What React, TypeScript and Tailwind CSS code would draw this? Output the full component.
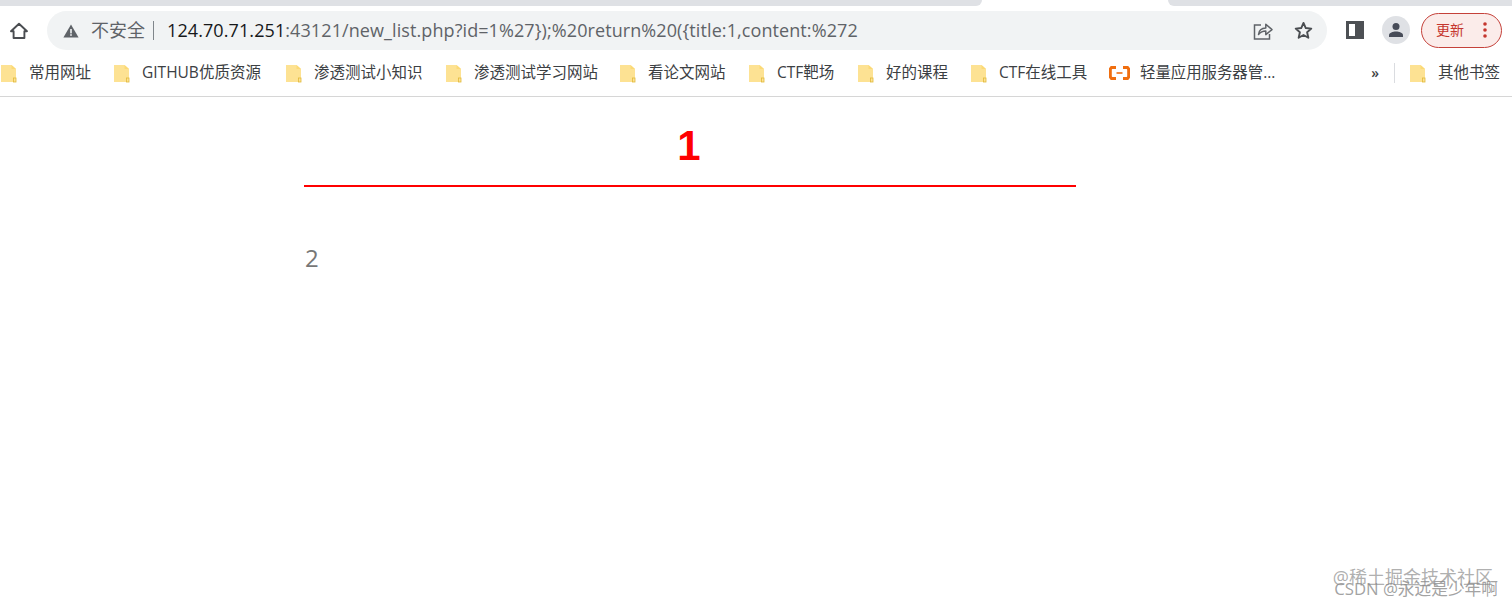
const CJK = "font-['Open_Sans','Noto_Sans_CJK_SC',sans-serif]";
const URL_REST = ":43121/new_list.php?id=1%27});%20return%20({title:1,content:%272";

const BOOKMARKS = [
  { label: "常用网址", width: "w-[113px]" },
  { label: "GITHUB优质资源", width: "w-[172px]" },
  { label: "渗透测试小知识", width: "w-[160px]" },
  { label: "渗透测试学习网站", width: "w-[174px]" },
  { label: "看论文网站", width: "w-[129px]" },
  { label: "CTF靶场", width: "w-[109px]" },
  { label: "好的课程", width: "w-[113px]" },
  { label: "CTF在线工具", width: "w-[138px]" },
];

function Folder() {
  return (
    <svg width="16" height="19" viewBox="0 0 16 19" className="shrink-0">
      <path d="M0 1h10.5L15 5v13H0z" fill="#fde293" />
      <path d="M10.5 1L15 5h-4.5z" fill="#fbd976" />
      <rect x="12.5" y="14" width="2.5" height="4" fill="none" stroke="#e2b93b" strokeWidth="0.8" />
    </svg>
  );
}

function Bookmark({ label, width }: { label: string; width: string }) {
  return (
    <div className={`flex items-center gap-[12px] shrink-0 ${width}`}>
      <Folder />
      <span className="text-[15.5px] text-[#3c4043] whitespace-nowrap">{label}</span>
    </div>
  );
}

function Toolbar() {
  return (
    <div className="flex items-center h-[44px] bg-white">
      <div className="w-[47px] flex justify-center shrink-0">
        <svg width="20" height="20" viewBox="0 0 20 20" className="mt-[5px] mr-[10px]" fill="none" stroke="#4a4d51" strokeWidth="1.9">
          <path d="M2 10.2L10 2.8l8 7.4h-2.6V17H4.6v-6.8z" strokeLinejoin="round" />
        </svg>
      </div>
      <div className="flex items-center w-[1280px] h-[39px] mt-[5px] rounded-full bg-[#f1f3f4] pl-[16px] shrink-0">
        <svg width="16" height="14" viewBox="0 0 16 14" className="shrink-0">
          <path d="M8 0.5L15.6 13.5H0.4z" fill="#5f6368" />
          <rect x="7.2" y="5" width="1.6" height="4.4" fill="#f1f3f4" />
          <rect x="7.2" y="10.2" width="1.6" height="1.6" fill="#f1f3f4" />
        </svg>
        <span className="ml-[12px] text-[18px] text-[#5f6368] whitespace-nowrap">不安全</span>
        <span className="ml-[8px] w-px h-[19px] bg-[#80868b]" />
        <span className="ml-[13px] text-[18px] whitespace-nowrap text-[#5f6368] tracking-[0.09px]">
          <span className="text-[#16181a]">124.70.71.251</span>
          {URL_REST}
        </span>
        <div className="ml-auto flex items-center gap-[21px] pr-[14px]">
          <svg width="20" height="20" viewBox="0 0 20 20" fill="none" stroke="#5f6368" strokeWidth="1.5">
            <path d="M8 4H1.5v14h15v-5" />
            <path d="M5.5 13.5c.4-4 3.2-6.4 7.3-6.5V3.2L19 8.6l-6.2 5V10c-3 0-5.3 1-7.3 3.5z" strokeLinejoin="round" />
          </svg>
          <svg width="19" height="19" viewBox="0 0 20 20" fill="none" stroke="#4a4d51" strokeWidth="2">
            <path d="M10 2l2.4 5.4 5.8.6-4.4 3.9 1.3 5.7L10 14.7l-5.1 2.9 1.3-5.7L1.8 8l5.8-.6z" strokeLinejoin="round" />
          </svg>
        </div>
      </div>
      <div className="flex items-center ml-[19px] mt-[4px]">
        <div className="w-[18px] h-[18px] border-[3px] border-[#4d5054] border-r-[9px] bg-white" />
        <div className="ml-[18px] w-[28px] h-[28px] rounded-full bg-[#dfe1e5] flex items-center justify-center">
          <svg width="16" height="16" viewBox="0 0 16 16" fill="#474c58">
            <circle cx="8" cy="4.5" r="3.5" />
            <path d="M1 15v-1.8C1 10.8 5 9.6 8 9.6s7 1.2 7 3.6V15z" />
          </svg>
        </div>
        <div className="ml-[11px] w-[81px] h-[35px] rounded-full border-[1.5px] border-[#c5413a] bg-[#fbecea] flex items-center pl-[14px]">
          <span className="text-[14px] text-[#c5362e] leading-none">更新</span>
          <svg width="4" height="16" viewBox="0 0 4 16" fill="#c5362e" className="ml-[19px]">
            <circle cx="2" cy="2" r="1.8" />
            <circle cx="2" cy="8" r="1.8" />
            <circle cx="2" cy="14" r="1.8" />
          </svg>
        </div>
      </div>
    </div>
  );
}

function BookmarkBar() {
  return (
    <div className="flex items-center h-[47px] pl-px border-b border-b-[#d6d6d6] bg-white">
      {BOOKMARKS.map((b) => (
        <Bookmark key={b.label} label={b.label} width={b.width} />
      ))}
      <div className="flex items-center gap-[10px] shrink-0">
        <svg width="21" height="14" viewBox="0 0 21 14" fill="none" stroke="#f06e0f" strokeWidth="3">
          <path d="M7 1.5H2.5L1.3 3v8l1.2 1.5H7" />
          <path d="M14 1.5h4.500L19.700 3v8l-1.200 1.500H14" />
          <path d="M7.5 7h6" strokeWidth="1.6" />
        </svg>
        <span className="text-[15.4px] text-[#3c4043] whitespace-nowrap">轻量应用服务器管...</span>
      </div>
      <div className="ml-auto flex items-center shrink-0">
        <span className="text-[14px] text-[#3c4043] font-semibold leading-none">»</span>
        <span className="ml-[15px] w-px h-[20px] bg-[#dadce0]" />
        <div className="ml-[15px]">
          <Bookmark label="其他书签" width="w-[102px]" />
        </div>
      </div>
    </div>
  );
}

export default function App() {
  return (
    <div className={`relative h-[606px] w-[1512px] overflow-hidden bg-white ${CJK}`}>
      <div className="flex h-[6px] bg-white">
        <div className="w-[982px] rounded-br-[7px] bg-[#dfe1e5]" />
        <div className="ml-[186px] flex-1 rounded-bl-[7px] bg-[#dfe1e5]" />
      </div>
      <Toolbar />
      <BookmarkBar />
      <div className="ml-[304px] w-[772px]">
        <h1 className="h-[90px] pt-[21px] pr-[2px] border-b-2 border-b-[#f00] text-center text-[42px] leading-[56px] font-bold text-[#f00] font-['Liberation_Sans',sans-serif]">
          1
        </h1>
        <p className="mt-[55px] text-[24px] leading-[32px] text-[#777] pl-px">2</p>
      </div>
      <div className="absolute right-[19px] top-[566px] text-[18px] leading-[22px] text-[#9a9a9a]/80 whitespace-nowrap">
        @稀土掘金技术社区
      </div>
      <div className="absolute right-[14px] top-[578px] text-[16.7px] leading-[22px] text-[#8a8a8a]/80 whitespace-nowrap">
        CSDN @永远是少年啊
      </div>
    </div>
  );
}
